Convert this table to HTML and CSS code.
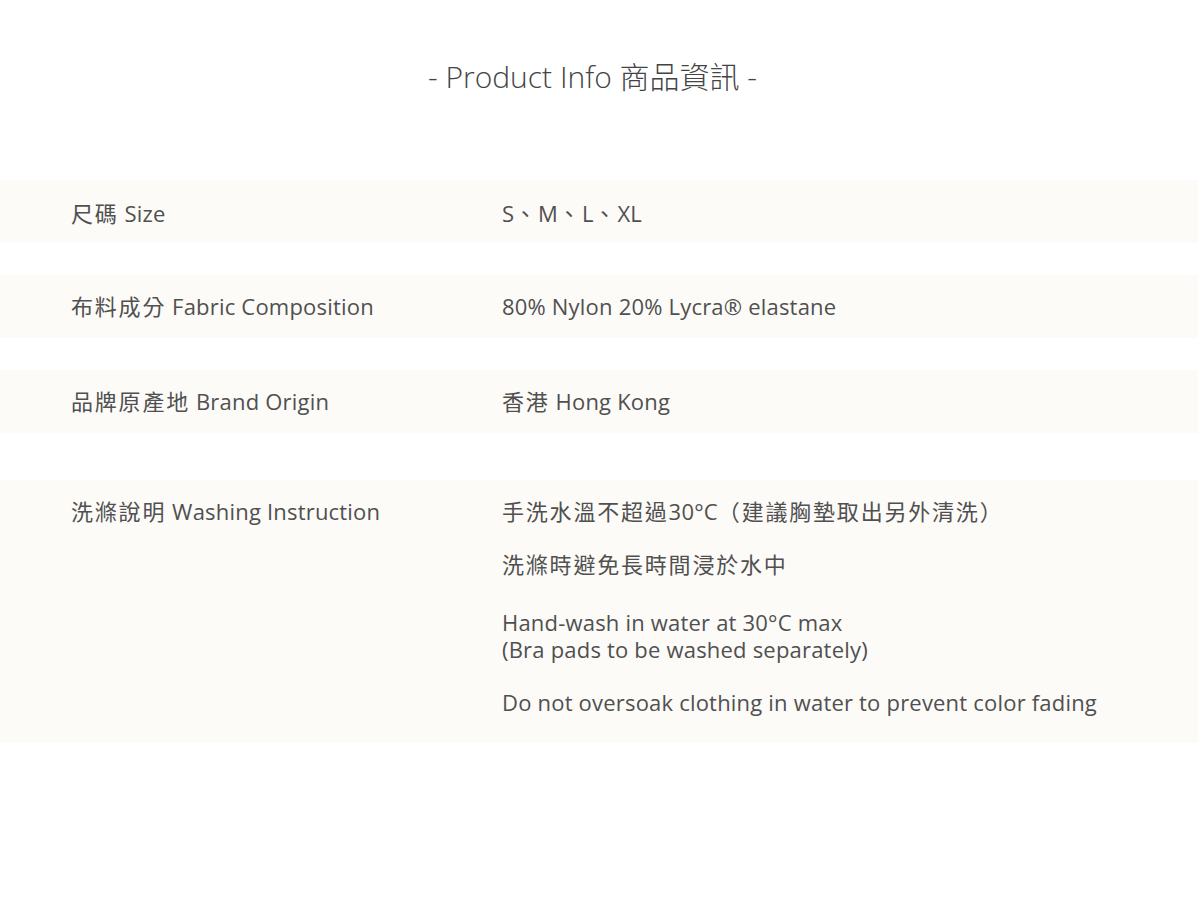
FILE: index.html
```html
<!DOCTYPE html>
<html lang="zh-Hant">
<head>
<meta charset="utf-8">
<title>Product Info</title>
<link rel="stylesheet" href="styles.css">
</head>
<body>
<main class="page">
  <h1 class="title">- Product Info 商品資訊 -</h1>
  <section class="table">
    <div class="row row-first">
      <div class="label"><span class="zh">尺碼</span> Size</div>
      <div class="value">S<span class="zh">、</span>M<span class="zh">、</span>L<span class="zh">、</span>XL</div>
    </div>
    <div class="row">
      <div class="label"><span class="zh">布料成分</span> Fabric Composition</div>
      <div class="value">80% Nylon 20% Lycra® elastane</div>
    </div>
    <div class="row">
      <div class="label"><span class="zh">品牌原產地</span> Brand Origin</div>
      <div class="value"><span class="zh">香港</span> Hong Kong</div>
    </div>
    <div class="row row-wash">
      <div class="label"><span class="zh">洗滌說明</span> Washing Instruction</div>
      <div class="value">
        <p class="para"><span class="zh">手洗水溫不超過</span>30°C<span class="zh">（建議胸墊取出另外清洗）</span></p>
        <p class="para para-gap"><span class="zh">洗滌時避免長時間浸於水中</span></p>
        <p class="para en">Hand-wash in water at 30°C max<br>(Bra pads to be washed separately)</p>
        <p class="para en last">Do not oversoak clothing in water to prevent color fading</p>
      </div>
    </div>
  </section>
</main>
</body>
</html>
```

FILE: styles.css
```css
html, body {
  margin: 0;
  padding: 0;
  background: #ffffff;
}

.page {
  width: 1198px;
  font-family: "Open Sans", "Noto Sans CJK TC", sans-serif;
  color: #505050;
}

.title {
  margin: 0;
  padding: 57px 13px 0 0;
  height: 180px;
  box-sizing: border-box;
  text-align: center;
  font-family: "Open Sans", "Noto Sans CJK TC", sans-serif;
  font-weight: 300;
  font-size: 30px;
  line-height: 40px;
  color: #444444;
}

.table {
  display: flex;
  flex-direction: column;
  gap: 32px;
}

.row {
  display: flex;
  background: #fcfbf8;
  padding: 18px 0 18px 71px;
  font-size: 22px;
  line-height: 27px;
  letter-spacing: 0.2px;
}

.zh {
  letter-spacing: 1.8px;
}

.row-first {
  padding-top: 20px;
  padding-bottom: 16px;
}

.row-wash {
  margin-top: 15px;
  padding-bottom: 27px;
}

.label {
  width: 431px;
  flex: none;
}

.value {
  flex: 1;
}

.para {
  margin: 0 0 26px;
}

.para.para-gap {
  margin-bottom: 31px;
}

.para.last {
  margin-bottom: 0;
}
```
